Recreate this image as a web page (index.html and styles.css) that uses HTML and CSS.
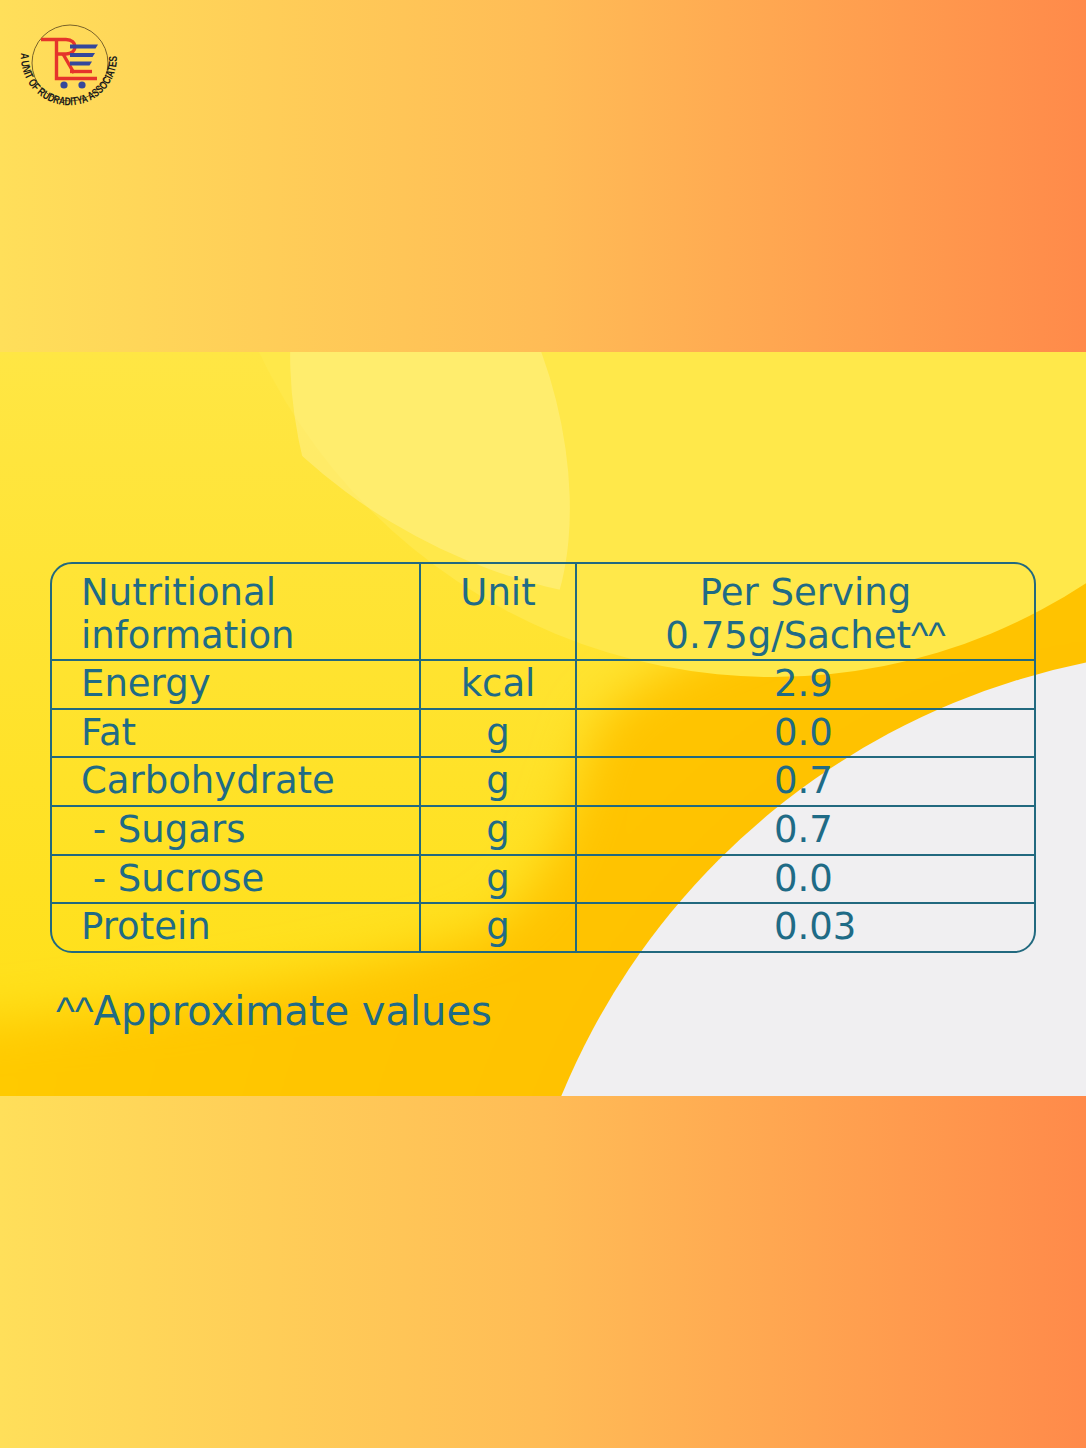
FILE: index.html
```html
<!DOCTYPE html>
<html lang="en">
<head>
<meta charset="utf-8">
<title>Nutritional information</title>
<link rel="stylesheet" href="styles.css">
</head>
<body>
<header class="top">
  <svg class="logo" width="140" height="120" viewBox="0 0 140 120">
    <defs>
      <path id="logoArc" d="M 21.2 53 A 48 48 0 1 0 116.8 53"/>
    </defs>
    <circle cx="70" cy="63" r="38" fill="none" stroke="#6a5524" stroke-width="0.9"/>
    <g fill="none" stroke="#E5342B" stroke-width="3.4">
      <path d="M41 39.5 H66 C78 39.5 78 54 66 54 H58"/>
      <path d="M56.5 39.5 V78.5 H97"/>
      <path d="M63 54 L74 73"/>
      <path d="M70 71.5 H92"/>
    </g>
    <g fill="#34479B">
      <polygon points="70,44.5 98,44.5 95.5,48.5 70,48.5"/>
      <polygon points="70,53 95,53 92.5,57 70,57"/>
      <polygon points="70,61.5 92,61.5 89.5,65.5 70,65.5"/>
      <circle cx="64" cy="85" r="3.6"/>
      <circle cx="82" cy="85" r="3.6"/>
    </g>
    <text class="logo-text"><textPath href="#logoArc" textLength="156" lengthAdjust="spacingAndGlyphs">A UNIT OF RUDRADITYA ASSOCIATES</textPath></text>
  </svg>
</header>

<section class="panel">
  <svg class="panel-bg" width="1086" height="744" viewBox="0 0 1086 744">
    <defs>
      <linearGradient id="baseG" x1="0" y1="0" x2="0" y2="1">
        <stop offset="0" stop-color="#FFE644"/>
        <stop offset="1" stop-color="#FFDF14"/>
      </linearGradient>
      <radialGradient id="deepG" gradientUnits="userSpaceOnUse" cx="1230" cy="1019" r="1300">
        <stop offset="0.55" stop-color="#FFC200"/>
        <stop offset="1" stop-color="#FFCA00"/>
      </radialGradient>
      <filter id="soft" filterUnits="userSpaceOnUse" x="-300" y="-300" width="1800" height="1400">
        <feGaussianBlur stdDeviation="24"/>
      </filter>
      <clipPath id="clipL">
        <circle cx="773" cy="-244" r="569"/>
      </clipPath>
    </defs>
    <rect width="1086" height="744" fill="url(#baseG)"/>
    <path d="M -100 680 C 120 658, 330 628, 470 585 C 548 555, 568 465, 592 385 C 615 320, 800 250, 1200 120 L 1200 900 L -100 900 Z" fill="url(#deepG)" filter="url(#soft)"/>
    <circle cx="773" cy="-244" r="569" fill="#FFE84A"/>
    <ellipse cx="430" cy="80" rx="130" ry="250" transform="rotate(-14 430 80)" fill="#FFF08A" opacity="0.55" clip-path="url(#clipL)"/>
    <circle cx="1230" cy="1019" r="723" fill="#F0EFF1"/>
  </svg>

  <div class="panel-content">
    <div class="nt">
      <div class="cell hd c1">Nutritional<br>information</div>
      <div class="cell hd c2">Unit</div>
      <div class="cell hd c3">Per Serving<br>0.75g/Sachet<span class="caret">^^</span></div>

      <div class="cell c1">Energy</div>
      <div class="cell c2">kcal</div>
      <div class="cell c3 val">2.9</div>

      <div class="cell c1">Fat</div>
      <div class="cell c2">g</div>
      <div class="cell c3 val">0.0</div>

      <div class="cell c1">Carbohydrate</div>
      <div class="cell c2">g</div>
      <div class="cell c3 val">0.7</div>

      <div class="cell c1 sub"> - Sugars</div>
      <div class="cell c2">g</div>
      <div class="cell c3 val">0.7</div>

      <div class="cell c1 sub"> - Sucrose</div>
      <div class="cell c2">g</div>
      <div class="cell c3 val">0.0</div>

      <div class="cell c1">Protein</div>
      <div class="cell c2">g</div>
      <div class="cell c3 val">0.03</div>
    </div>
    <p class="note"><span class="caret">^^</span>Approximate values</p>
  </div>
</section>

<footer class="bottom"></footer>
</body>
</html>
```

FILE: styles.css
```css
html, body {
  margin: 0;
  padding: 0;
}

body {
  width: 1086px;
  height: 1448px;
  overflow: hidden;
  background: linear-gradient(to right, #FFDF5A 0%, #FFBC56 50%, #FF8A4A 100%);
  font-family: "DejaVu Sans", sans-serif;
}

.top {
  height: 352px;
}

.logo {
  display: block;
  width: 140px;
  height: 120px;
}

.logo-text {
  font-family: "Liberation Sans", Arial, sans-serif;
  font-weight: 700;
  font-size: 11.5px;
  fill: #1b1b1b;
}

.panel {
  display: grid;
  height: 744px;
}

.panel > * {
  grid-area: 1 / 1;
}

.panel-bg {
  display: block;
  width: 1086px;
  height: 744px;
}

.panel-content {
  align-self: start;
  padding: 210px 50px 0 50px;
}

.nt {
  display: grid;
  grid-template-columns: 367px 156px 1fr;
  border: 2px solid #22697F;
  border-radius: 22px;
  color: #1F6B86;
  font-size: 37px;
}

.cell {
  box-sizing: border-box;
  height: 48.67px;
  line-height: 46.67px;
  border-top: 2px solid #22697F;
  white-space: pre;
}

.cell.hd {
  height: 95px;
  border-top: 0;
  padding-top: 7px;
  line-height: 43px;
}

.c1 {
  padding-left: 29px;
}

.c2 {
  border-left: 2px solid #22697F;
  text-align: center;
}

.c3 {
  border-left: 2px solid #22697F;
  text-align: center;
}

.c3.val {
  text-align: left;
  padding-left: 197px;
}

.caret {
  font-family: "Liberation Sans", Arial, sans-serif;
}

.note {
  margin: 35px 0 0 6px;
  font-size: 40px;
  color: #1F6B86;
}

.bottom {
  height: 352px;
}
```
